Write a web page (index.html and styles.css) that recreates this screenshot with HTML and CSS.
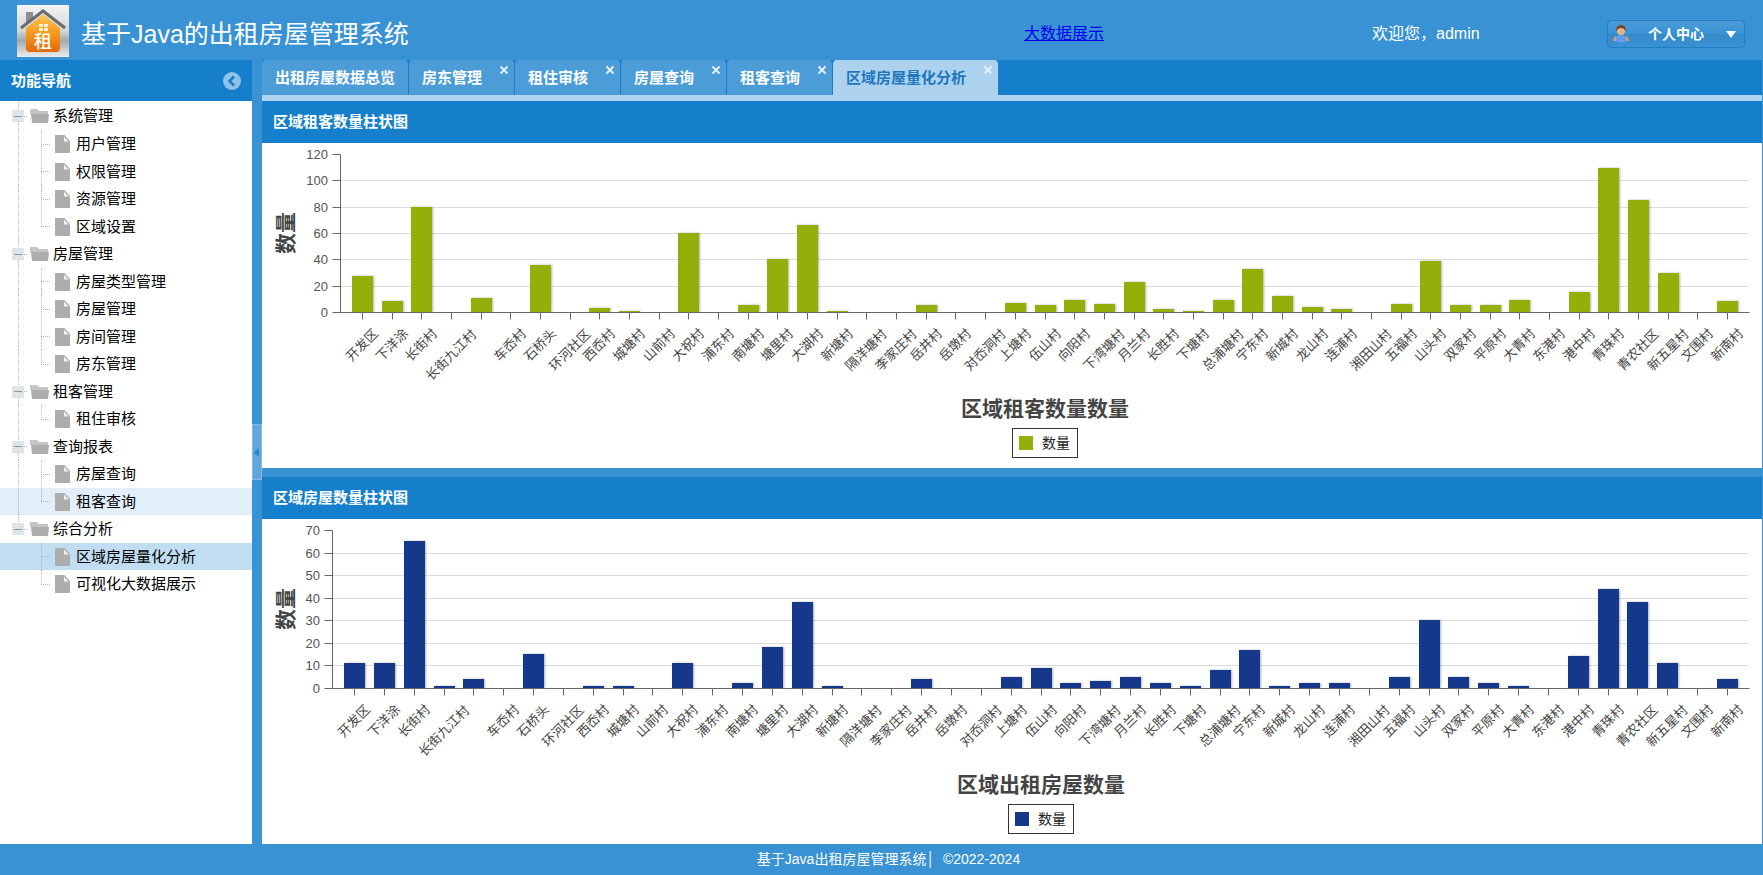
FILE: index.html
```html
<!DOCTYPE html>
<html lang="zh-CN">
<head>
<meta charset="utf-8">
<title>基于Java的出租房屋管理系统</title>
<link rel="stylesheet" href="styles.css">
</head>
<body>
<svg class="sprite" aria-hidden="true">
  <symbol id="i-folder" viewBox="0 0 20 16">
    <path fill="#c4c4c4" d="M0 1h7l2 2h9v3H0z"/>
    <path fill="#adadad" d="M1 6h18l-1 9H2z"/>
  </symbol>
  <symbol id="i-leaf" viewBox="0 0 20 20">
    <path fill="#adadad" d="M2 1h9.500l5.500 6v12H2z"/>
    <path fill="#f1f1f1" d="M11 2.500V7.500h4.800z"/>
  </symbol>
  <symbol id="i-close" viewBox="0 0 10 10">
    <path d="M1.500 1.500l7 7M8.500 1.500l-7 7" stroke="#e4f0f9" stroke-width="2" fill="none"/>
  </symbol>
</svg>

<header class="topbar">
  <div class="brand">
    <svg class="logo" viewBox="0 0 52 52" role="img" aria-label="租">
      <defs>
        <linearGradient id="lg-bg" x1="0" y1="0" x2="0" y2="1"><stop offset="0" stop-color="#f3f4f5"/><stop offset=".5" stop-color="#d3d5d8"/><stop offset=".68" stop-color="#a4a8ac"/><stop offset="1" stop-color="#eceded"/></linearGradient>
        <linearGradient id="lg-house" x1="0" y1="0" x2="0" y2="1"><stop offset="0" stop-color="#fbc65c"/><stop offset=".5" stop-color="#f59a1f"/><stop offset="1" stop-color="#e5680a"/></linearGradient>
      </defs>
      <rect width="52" height="52" fill="url(#lg-bg)"/>
      <path d="M9 7h7v6l-7 6z" fill="#8b8d90"/>
      <path d="M26 9l17 14v20q0 4-4 4H13q-4 0-4-4V23z" fill="url(#lg-house)"/>
      <path d="M4 23L26 6l22 17" fill="none" stroke="#696c70" stroke-width="3"/>
      <path d="M22 19h4v3h-4zM27 19h4v3h-4zM22 23h4v3h-4zM27 23h4v3h-4z" fill="#fff3d8"/>
      <text x="26" y="43" text-anchor="middle" class="logo-text">租</text>
    </svg>
    <h1>基于Java的出租房屋管理系统</h1>
  </div>
  <div><a class="big-data" href="#">大数据展示</a></div>
  <div class="welcome">欢迎您，admin</div>
  <button class="user-btn" type="button">
    <svg width="18" height="18" viewBox="0 0 18 18" aria-hidden="true">
      <path d="M1 16q0-4 3-5l2 5zM17 16q0-4-3-5l-2 5z" fill="#d79a72"/>
      <path d="M4 16q-1-6 5-6t5 6q-5 3-10 0z" fill="#5f9df0"/>
      <circle cx="9" cy="6" r="4" fill="#e8b48c"/>
      <path d="M4 6Q4 0 9 0t5 6q-2-3-5-3T4 6z" fill="#7b4420"/>
    </svg>
    <span>个人中心</span>
    <svg width="10" height="7" viewBox="0 0 10 7" aria-hidden="true"><path d="M0 0h10L5 7z" fill="#fff"/></svg>
  </button>
</header>

<div class="workspace">
  <nav class="sidebar" aria-label="功能导航">
    <div class="panel-head side-head">
      <h2>功能导航</h2>
      <button type="button" class="collapse" aria-label="收起">
        <svg width="18" height="18" viewBox="0 0 18 18"><circle cx="9" cy="9" r="9" fill="#8fc2e8"/><path d="M11 4.500L6.500 9l4.500 4.500" fill="none" stroke="#157fcc" stroke-width="2.500"/></svg>
      </button>
    </div>
    <ul class="tree" id="tree"></ul>
  </nav>
  <div class="splitter"><button type="button" aria-label="折叠导航"><svg width="5" height="9" viewBox="0 0 5 9"><path d="M5 0v9L0 4.500z" fill="#2b86c9"/></svg></button></div>

  <main class="content">
    <div class="tabs">
      <div class="tab"><button type="button">出租房屋数据总览</button></div>
      <div class="tab closable"><button type="button">房东管理</button><button type="button" class="close" aria-label="关闭"><svg><use href="#i-close"/></svg></button></div>
      <div class="tab closable"><button type="button">租住审核</button><button type="button" class="close" aria-label="关闭"><svg><use href="#i-close"/></svg></button></div>
      <div class="tab closable"><button type="button">房屋查询</button><button type="button" class="close" aria-label="关闭"><svg><use href="#i-close"/></svg></button></div>
      <div class="tab closable"><button type="button">租客查询</button><button type="button" class="close" aria-label="关闭"><svg><use href="#i-close"/></svg></button></div>
      <div class="tab closable active"><button type="button">区域房屋量化分析</button><button type="button" class="close" aria-label="关闭"><svg><use href="#i-close"/></svg></button></div>
    </div>
    <section class="panel">
      <div class="panel-head"><h2>区域租客数量柱状图</h2></div>
      <div class="chart tenants">
        <svg class="plot" id="chart-tenants" role="img" aria-label="区域租客数量数量"></svg>
        <div class="caption">
          <h3>区域租客数量数量</h3>
          <div class="legend"><i></i>数量</div>
        </div>
      </div>
    </section>
    <section class="panel">
      <div class="panel-head"><h2>区域房屋数量柱状图</h2></div>
      <div class="chart houses">
        <svg class="plot" id="chart-houses" role="img" aria-label="区域出租房屋数量"></svg>
        <div class="caption">
          <h3>区域出租房屋数量</h3>
          <div class="legend"><i></i>数量</div>
        </div>
      </div>
    </section>
  </main>
</div>

<footer class="footer">基于Java出租房屋管理系统│&nbsp;&nbsp;©2022-2024</footer>
<script src="app.js"></script>
</body>
</html>
```

FILE: styles.css
```css
* { box-sizing: border-box; }

body {
  margin: 0;
  min-height: 100vh;
  display: flex;
  flex-direction: column;
  background: #3892d3;
  color: #000;
  font: 15px/20px "Liberation Sans", "Noto Sans CJK SC", sans-serif;
}

h1, h2, h3, ul { margin: 0; padding: 0; }
h1 { font-size: 25px; line-height: 36px; font-weight: 400; }
h2 { font-size: 15px; line-height: 20px; }
button { font: inherit; color: inherit; background: none; border: 0; padding: 0; cursor: pointer; }
svg { display: block; }
.sprite { position: absolute; width: 0; height: 0; }

/* top bar */
.topbar {
  display: grid;
  grid-template-columns: 1007fr 348fr 235fr 138px;
  align-items: center;
  height: 60px;
  padding: 5px 18px 0 17px;
  color: #fff;
  font-size: 16px;
}
.brand { display: flex; align-items: center; gap: 12px; white-space: nowrap; padding-bottom: 6px; }
.brand h1 { padding-top: 6px; }
.logo { width: 52px; height: 52px; flex: none; }
.logo-text { fill: #fff; font-size: 18px; font-weight: 500; }
.big-data { color: #0000ee; }
.user-btn {
  display: flex;
  align-items: center;
  justify-content: space-between;
  height: 28px;
  padding: 0 8px 0 4px;
  border: 1px solid #1f7ec4;
  border-radius: 4px;
  background: linear-gradient(#4b9cd7, #3892d3 50%, #358ac8 52%, #3892d3);
  font-size: 14px;
  font-weight: 700;
}
.user-btn span { padding-right: 4px; }

/* frame */
.workspace { flex: 1; display: grid; grid-template-columns: 252px 10px minmax(0, 1fr); padding-right: 1px; }
.sidebar { background: #fff; }
.panel-head {
  display: flex;
  align-items: center;
  height: 42px;
  padding: 0 11px;
  background: #157fcc;
  color: #fff;
}
.side-head { height: 41px; justify-content: space-between; }
.splitter { display: flex; align-items: center; }
.splitter button {
  display: flex;
  align-items: center;
  justify-content: flex-end;
  width: 10px;
  height: 56px;
  padding-right: 2px;
  background: #60a7dc;
  border: 1px solid #84bbe4;
}

/* navigation tree */
.tree { list-style: none; padding-top: 1px; }
.tree li { height: 28px; }
.tree li:nth-child(odd) { height: 27px; }
.tree li:first-child { height: 28px; }
.tree a {
  display: flex;
  align-items: center;
  height: 100%;
  padding-left: 7px;
  color: #000;
  text-decoration: none;
}
.tree li.hover { background: #e2eff8; }
.tree li.selected { background: #c1ddf1; }
.guide {
  --v: repeating-linear-gradient(to bottom, #b4b4b4 0 1px, transparent 1px 2px);
  --h: repeating-linear-gradient(to right, #b4b4b4 0 1px, transparent 1px 2px);
  width: 23px;
  height: 100%;
  flex: none;
  background-repeat: no-repeat;
}
.guide.line { background-image: var(--v); background-position: 11px 0; background-size: 1px 100%; }
.guide.tee { background-image: var(--v), var(--h); background-position: 11px 0, 11px 50%; background-size: 1px 100%, 10px 1px; }
.guide.elbow { background-image: var(--v), var(--h); background-position: 11px 0, 11px 50%; background-size: 1px 50%, 10px 1px; }
.toggle { display: flex; align-items: center; padding-left: 5px; }
.toggle::before {
  content: "";
  width: 12px;
  height: 12px;
  background: linear-gradient(#8f979d, #8f979d) center / 8px 1px no-repeat #dfe4e8;
}
.tree svg { width: 20px; height: 20px; margin-right: 3px; flex: none; }
.tree .folder { height: 16px; }

/* tabs */
.content { display: flex; flex-direction: column; }
.tabs {
  display: flex;
  gap: 1px;
  height: 41px;
  padding-right: 1px;
  background: #157fcc;
  border-bottom: 6px solid #add2ed;
}
.tab {
  position: relative;
  display: flex;
  padding: 0 13px;
  border-radius: 4px 4px 0 0;
  background: #4b9cd7;
  color: #fff;
  font-weight: 700;
  white-space: nowrap;
}
.tab.closable { padding-right: 32px; }
.tab.active { background: #add2ed; color: #1f77bd; }
.tab > button:first-child { padding-top: 1px; }
.tab .close { position: absolute; top: 5px; right: 5px; }
.close svg { width: 10px; height: 10px; }

/* chart panels */
.panel { flex: 1; display: flex; flex-direction: column; }
.panel + .panel { margin-top: 9px; }
.chart { flex: 1; background: #fff; padding-bottom: 10px; }
.tenants { --bar: #94ae0a; --axis-x: 78px; }
.houses { --bar: #15388a; --axis-x: 70px; }
.plot { width: 100%; height: 254px; overflow: visible; }
.caption {
  display: flex;
  flex-direction: column;
  align-items: center;
  gap: 7px;
  padding-left: var(--axis-x);
  padding-right: 12px;
  color: #444;
}
.caption h3 { font-size: 21px; line-height: 24px; }
.legend {
  display: flex;
  align-items: center;
  gap: 9px;
  height: 30px;
  padding: 0 7px 0 6px;
  border: 1px solid #333;
  color: #222;
  font-size: 14px;
}
.legend i { width: 14px; height: 14px; background: var(--bar); }

.plot text { fill: #555; font-size: 13px; dominant-baseline: central; }
.plot .num { text-anchor: end; }
.plot .name { text-anchor: middle; fill: #444; }
.plot .axis-title { text-anchor: middle; fill: #444; font-size: 21px; font-weight: 700; }
.plot .grid { stroke: #dcdcdc; stroke-width: 1; }
.plot .axis { stroke: #666; stroke-width: 1; }
.plot .bar { fill: var(--bar); filter: drop-shadow(1px 0 1px rgb(0 0 0 / 30%)); }

.footer {
  height: 31px;
  padding-left: 14px;
  color: #fff;
  font-size: 14px;
  line-height: 31px;
  text-align: center;
}
```

FILE: app.js
```js
const groups = [
  ["系统管理", ["用户管理", "权限管理", "资源管理", "区域设置"]],
  ["房屋管理", ["房屋类型管理", "房屋管理", "房间管理", "房东管理"]],
  ["租客管理", ["租住审核"]],
  ["查询报表", ["房屋查询", "租客查询"]],
  ["综合分析", ["区域房屋量化分析", "可视化大数据展示"]]
];
const rowState = { "租客查询": "hover", "区域房屋量化分析": "selected" };

document.getElementById("tree").innerHTML = groups.map(([name, items], g) => {
  const lastGroup = g === groups.length - 1;
  const head = `<li><a href="#"><span class="guide toggle ${lastGroup ? "elbow" : "tee"}"></span><svg class="folder"><use href="#i-folder"/></svg>${name}</a></li>`;
  return head + items.map((item, i) =>
    `<li class="${rowState[item] || ""}"><a href="#"><span class="guide ${lastGroup ? "" : "line"}"></span><span class="guide ${i === items.length - 1 ? "elbow" : "tee"}"></span><svg><use href="#i-leaf"/></svg>${item}</a></li>`
  ).join("");
}).join("");

const areas = ["开发区","下洋涂","长街村","长街九江村","","车岙村","石桥头","环河社区","西岙村","城塘村","山前村","大祝村","浦东村","南塘村","塘里村","大湖村","新塘村","隔洋塘村","李家庄村","岳井村","岳墩村","对岙洞村","上塘村","伍山村","向阳村","下湾塘村","月兰村","长胜村","下塘村","总浦塘村","宁东村","新城村","龙山村","连浦村","湘田山村","五福村","山头村","双家村","平原村","大青村","东港村","港中村","青珠村","青农社区","新五星村","文围村","新南村"];
const tenants = [27,8,80,0,11,0,36,0,3,1,0,60,0,5,40,66,1,0,0,5,0,0,7,5,9,6,23,2,1,9,33,12,4,2,0,6,39,5,5,9,0,15,109,85,30,0,8];
const houses = [11,11,65,1,4,0,15,0,1,1,0,11,0,2,18,38,1,0,0,4,0,0,5,9,2,3,5,2,1,8,17,1,2,2,0,5,30,5,2,1,0,14,44,38,11,0,4];

function drawChart(id, values, max, step, left) {
  const svg = document.getElementById(id);
  const right = svg.getBoundingClientRect().width - 14;
  const top = 11, base = 169, inset = 22, barWidth = 21, fontSize = 13;
  const y = v => Math.round(base - v / max * (base - top));
  const line = (cls, x1, y1, x2, y2) => `<line class="${cls}" x1="${x1 + .5}" y1="${y1 + .5}" x2="${x2 + .5}" y2="${y2 + .5}"/>`;
  let out = "";
  for (let v = 0; v <= max; v += step) {
    if (v > 0 && v < max) out += line("grid", left, y(v), right, y(v));
    out += line("axis", left - 8, y(v), left, y(v));
    out += `<text class="num" x="${left - 12}" y="${y(v)}">${v}</text>`;
  }
  const gap = (right - left - inset * 2 + 1) / (areas.length - 1);
  areas.forEach((name, i) => {
    const x = Math.round(left + inset + gap * i);
    if (values[i]) out += `<rect class="bar" x="${x - 10}" y="${y(values[i])}" width="${barWidth}" height="${base - y(values[i])}"/>`;
    out += line("axis", x, base, x, base + 7);
    const cy = Math.round(184 + (name.length + 1) * fontSize * Math.SQRT1_2 / 2);
    if (name) out += `<text class="name" transform="translate(${x} ${cy}) rotate(-45)">${name}</text>`;
  });
  out += line("axis", left, top, left, base) + line("axis", left, base, right + 1, base);
  out += `<text class="axis-title" transform="translate(23 ${(top + base) / 2}) rotate(-90)">数量</text>`;
  svg.innerHTML = out;
}

function drawAll() {
  drawChart("chart-tenants", tenants, 120, 20, 78);
  drawChart("chart-houses", houses, 70, 10, 70);
}
drawAll();
window.addEventListener("resize", drawAll);
```
